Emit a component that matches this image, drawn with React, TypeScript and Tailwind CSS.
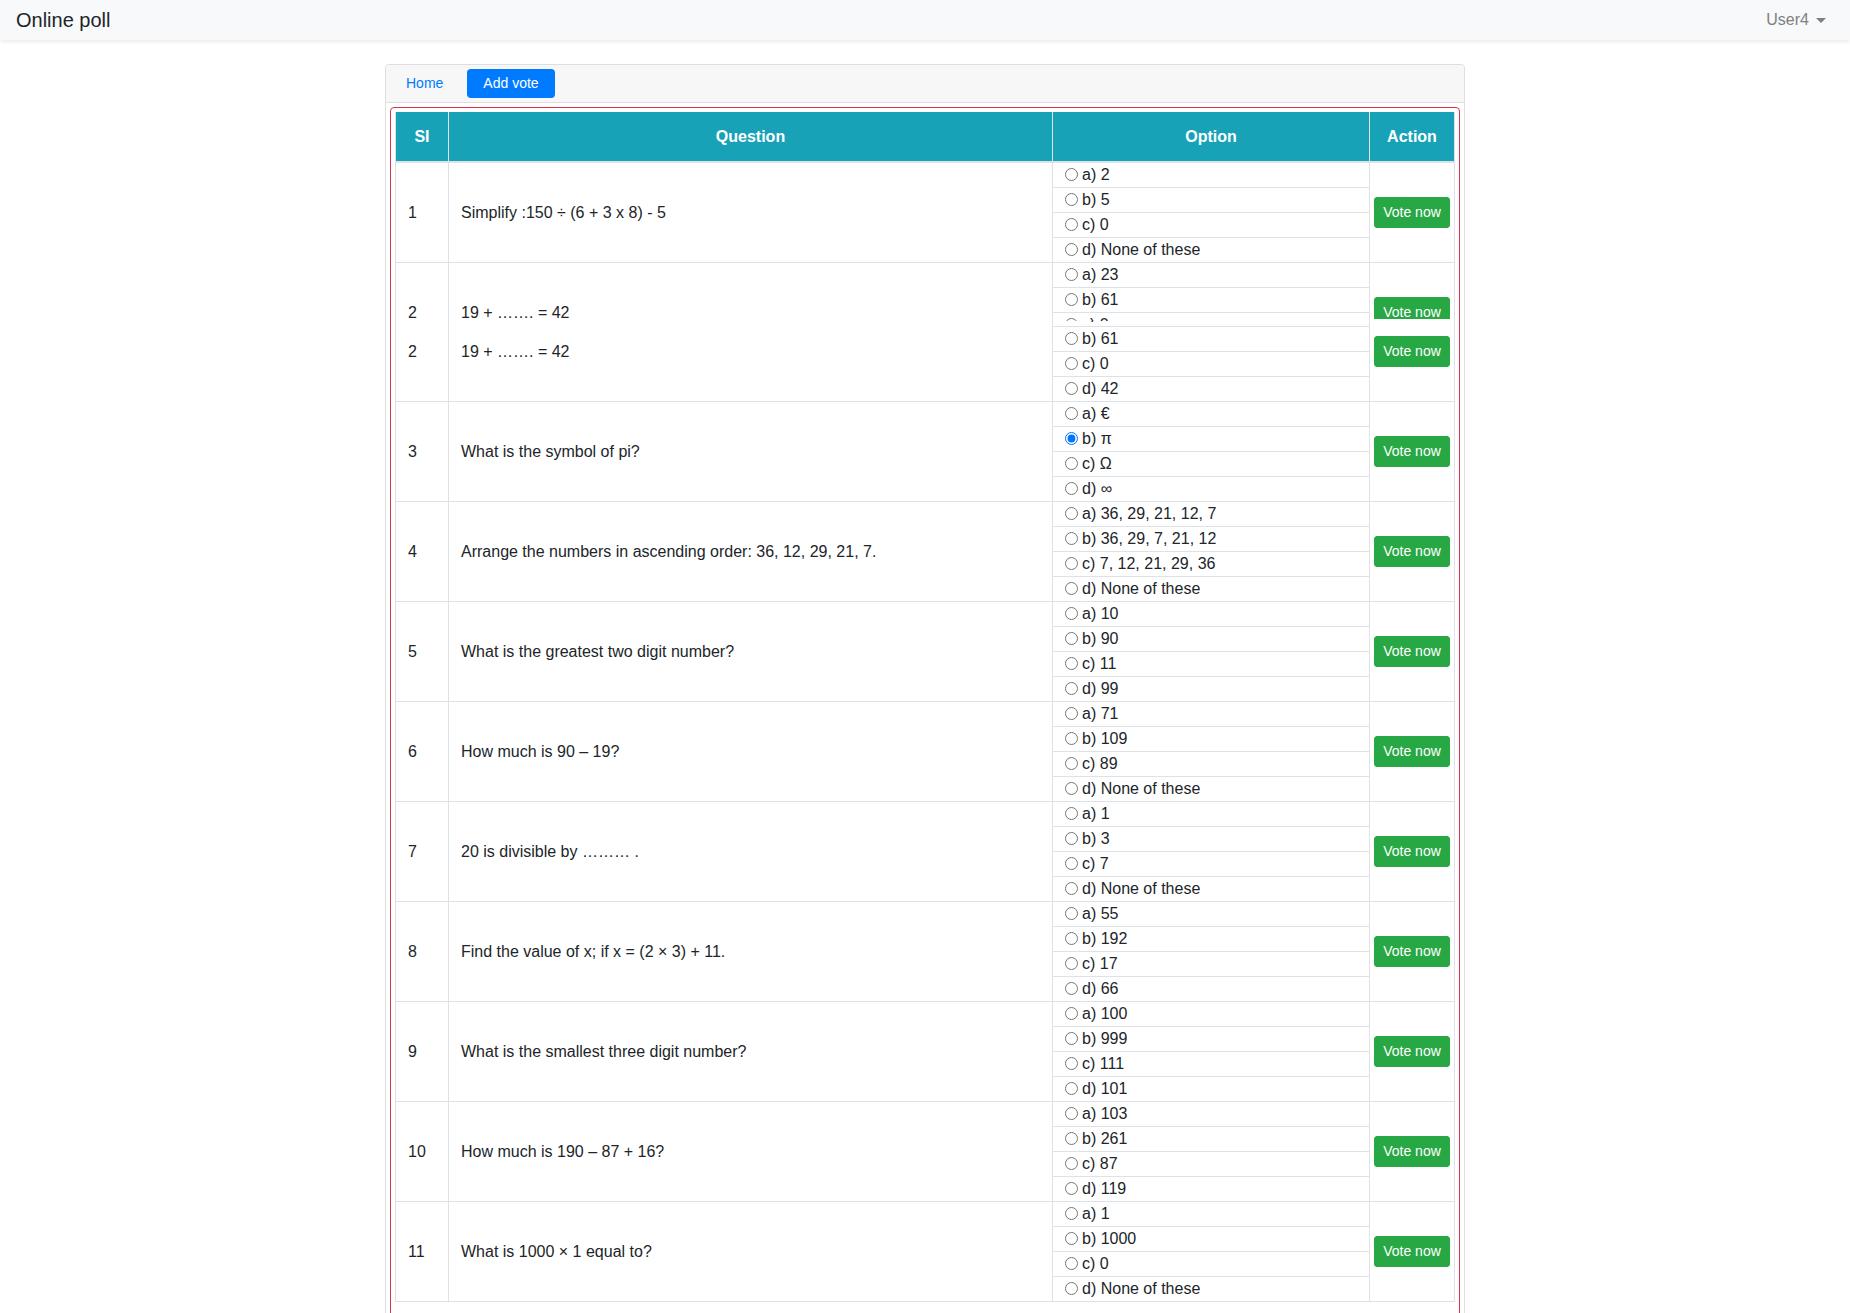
import { ReactNode } from "react";

interface Poll {
  si: number;
  question: string;
  options: string[];
  checked?: number;
}

const polls: Poll[] = [
  { si: 1, question: "Simplify :150 ÷ (6 + 3 x 8) - 5", options: ["a) 2", "b) 5", "c) 0", "d) None of these"] },
  { si: 2, question: "19 + ……. = 42", options: ["a) 23", "b) 61", "c) 0", "d) 42"] },
  { si: 3, question: "What is the symbol of pi?", options: ["a) €", "b) π", "c) Ω", "d) ∞"], checked: 1 },
  {
    si: 4,
    question: "Arrange the numbers in ascending order: 36, 12, 29, 21, 7.",
    options: ["a) 36, 29, 21, 12, 7", "b) 36, 29, 7, 21, 12", "c) 7, 12, 21, 29, 36", "d) None of these"],
  },
  { si: 5, question: "What is the greatest two digit number?", options: ["a) 10", "b) 90", "c) 11", "d) 99"] },
  { si: 6, question: "How much is 90 – 19?", options: ["a) 71", "b) 109", "c) 89", "d) None of these"] },
  { si: 7, question: "20 is divisible by ……… .", options: ["a) 1", "b) 3", "c) 7", "d) None of these"] },
  { si: 8, question: "Find the value of x; if x = (2 × 3) + 11.", options: ["a) 55", "b) 192", "c) 17", "d) 66"] },
  { si: 9, question: "What is the smallest three digit number?", options: ["a) 100", "b) 999", "c) 111", "d) 101"] },
  { si: 10, question: "How much is 190 – 87 + 16?", options: ["a) 103", "b) 261", "c) 87", "d) 119"] },
  { si: 11, question: "What is 1000 × 1 equal to?", options: ["a) 1", "b) 1000", "c) 0", "d) None of these"] },
];

// one cell of a row, always 100px tall with the row's bottom line
function SiCell({ poll }: { poll: Poll }) {
  return (
    <div className="h-[100px] border-b border-[#dee2e6] flex items-center pl-3">{poll.si}</div>
  );
}

function QuestionCell({ poll }: { poll: Poll }) {
  return (
    <div className="h-[100px] border-b border-[#dee2e6] flex items-center pl-3">{poll.question}</div>
  );
}

function OptionCell({ poll, idx }: { poll: Poll; idx: number }) {
  return (
    <div className="h-[100px] border-b border-[#dee2e6] flex flex-col">
      {poll.options.map((opt, i) => (
        <label
          key={opt}
          className={
            i < 3
              ? "h-[25px] shrink-0 border-b border-[#dee2e6] flex items-center pl-3"
              : "h-[24px] shrink-0 flex items-center pl-3"
          }
        >
          <input
            type="radio"
            name={`poll-${idx}`}
            defaultChecked={poll.checked === i}
            className="w-[13px] h-[13px] mr-1 mb-[2px]"
          />
          <span>{opt}</span>
        </label>
      ))}
    </div>
  );
}

function ActionCell() {
  return (
    <div className="h-[100px] border-b border-[#dee2e6] flex items-center justify-center">
      <button className="bg-[#28a745] border border-[#28a745] text-white text-[14px] leading-[21px] px-2 py-1 rounded-[3px]">
        Vote now
      </button>
    </div>
  );
}

function PollRow({ poll, idx }: { poll: Poll; idx: number }) {
  return (
    <div className="flex">
      <div className="w-[53px] border-l border-[#dee2e6]">
        <SiCell poll={poll} />
      </div>
      <div className="w-[604px] border-l border-[#dee2e6]">
        <QuestionCell poll={poll} />
      </div>
      <div className="w-[317px] border-l border-[#dee2e6]">
        <OptionCell poll={poll} idx={idx} />
      </div>
      <div className="w-[86px] border-x border-[#dee2e6]">
        <ActionCell />
      </div>
    </div>
  );
}

// the second row in the capture is torn: its top part, then the same row again from a little lower down
function Torn({ top, rest, shift, children }: { top: string; rest: string; shift: string; children: ReactNode }) {
  return (
    <>
      <div className={`${top} overflow-hidden shrink-0`}>{children}</div>
      <div className={`${rest} overflow-hidden shrink-0`}>
        <div className={shift}>{children}</div>
      </div>
    </>
  );
}

function TornRow({ poll, idx }: { poll: Poll; idx: number }) {
  return (
    <div className="flex h-[139px]">
      <div className="w-[53px] border-l border-[#dee2e6] flex flex-col">
        <Torn top="h-[56px]" rest="h-[83px]" shift="-mt-[17px]">
          <SiCell poll={poll} />
        </Torn>
      </div>
      <div className="w-[604px] border-l border-[#dee2e6] flex flex-col">
        <Torn top="h-[56px]" rest="h-[83px]" shift="-mt-[17px]">
          <QuestionCell poll={poll} />
        </Torn>
      </div>
      <div className="w-[317px] border-l border-[#dee2e6] flex flex-col">
        <Torn top="h-[58px]" rest="h-[81px]" shift="-mt-[19px]">
          <OptionCell poll={poll} idx={idx} />
        </Torn>
      </div>
      <div className="w-[86px] border-x border-[#dee2e6] flex flex-col">
        <Torn top="h-[56px]" rest="h-[83px]" shift="-mt-[17px]">
          <ActionCell />
        </Torn>
      </div>
    </div>
  );
}

export default function App() {
  return (
    <div className="min-h-screen bg-white text-[#212529] text-[16px] leading-[24px] font-['Liberation_Sans',Arial,sans-serif]">
      {/* ── Navbar ── */}
      <nav className="h-[40px] bg-[#f8f9fa] shadow-[0_2px_4px_rgba(0,0,0,0.08)] flex items-center justify-between pl-[16px] pr-[24px]">
        <span className="text-[20px] leading-[30px]">Online poll</span>
        <div className="flex items-center text-[#808080]">
          <span>User4</span>
          <span className="ml-[7px] w-0 h-0 border-x-[5px] border-x-transparent border-t-[5px] border-t-[#808080]" />
        </div>
      </nav>

      {/* ── Card ── */}
      <div className="w-[1080px] mx-auto mt-6 border border-[#dfdfdf] rounded-[4px]">
        <div className="h-[38px] bg-[#f7f7f7] border-b border-[#dfdfdf] rounded-t-[4px] flex items-center gap-2 px-1 text-[14px] leading-[21px]">
          <a className="px-4 py-1 text-[#007bff]">Home</a>
          <a className="px-4 py-1 bg-[#007bff] text-white rounded-[4px]">Add vote</a>
        </div>

        <div className="p-1">
          <div className="border border-[#dc3545] rounded-[4px] p-1">
            <div className="mb-4">
              <div className="flex h-[51px] bg-[#17a2b8] text-white font-bold border-b-2 border-[#dee2e6]">
                <div className="w-[53px] border-l border-[#dee2e6] flex items-center justify-center">SI</div>
                <div className="w-[604px] border-l border-[#dee2e6] flex items-center justify-center">Question</div>
                <div className="w-[317px] border-l border-[#dee2e6] flex items-center justify-center">Option</div>
                <div className="w-[86px] border-x border-[#dee2e6] flex items-center justify-center">Action</div>
              </div>
              {polls.map((p, i) =>
                i === 1 ? <TornRow key={p.si} poll={p} idx={i} /> : <PollRow key={p.si} poll={p} idx={i} />
              )}
            </div>
          </div>
        </div>
      </div>
    </div>
  );
}
